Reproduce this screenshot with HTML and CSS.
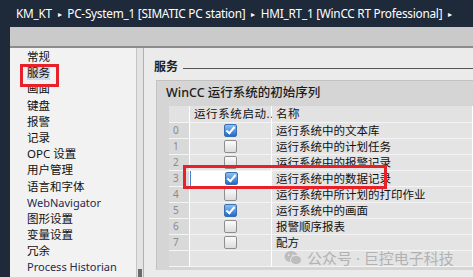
FILE: index.html
```html
<!DOCTYPE html>
<html>
<head>
<meta charset="utf-8">
<link rel="stylesheet" href="styles.css">
</head>
<body>
<div class="frame">
  <div class="crumbs">KM_KT <span class="arr">&#9656;</span> PC-System_1 [SIMATIC PC station] <span class="arr">&#9656;</span> HMI_RT_1 [WinCC RT Professional] <span class="arr">&#9656;</span></div>
  <div class="panel">
    <div class="toolbar"></div>
    <div class="body">
      <div class="nav">
        <div class="nav-item">常规</div>
        <div class="nav-item"><span class="mark">服务</span></div>
        <div class="nav-item">画面</div>
        <div class="nav-item">键盘</div>
        <div class="nav-item">报警</div>
        <div class="nav-item">记录</div>
        <div class="nav-item">OPC 设置</div>
        <div class="nav-item">用户管理</div>
        <div class="nav-item">语言和字体</div>
        <div class="nav-item latin">WebNavigator</div>
        <div class="nav-item">图形设置</div>
        <div class="nav-item">变量设置</div>
        <div class="nav-item">冗余</div>
        <div class="nav-item latin">Process Historian</div>
      </div>
      <div class="scroll"><div class="thumb"></div></div>
      <div class="content">
        <div class="section"><span class="section-title">服务</span><span class="rule"></span></div>
        <div class="group">
          <div class="group-title">WinCC 运行系统的初始序列</div>
          <div class="grid">
            <div class="hd"></div><div class="hd">运行系统启动...</div><div class="hd">名称</div>

            <div class="idx">0</div><div class="chk"><span class="box on"></span></div><div class="name">运行系统中的文本库</div>
            <div class="idx">1</div><div class="chk"><span class="box"></span></div><div class="name">运行系统中的计划任务</div>
            <div class="idx">2</div><div class="chk"><span class="box"></span></div><div class="name">运行系统中的报警记录</div>
            <div class="idx">3</div><div class="chk sel"><span class="box on"></span></div><div class="name">运行系统中的数据记录</div>
            <div class="idx">4</div><div class="chk"><span class="box"></span></div><div class="name">运行系统中所计划的打印作业</div>
            <div class="idx">5</div><div class="chk"><span class="box on"></span></div><div class="name">运行系统中的画面</div>
            <div class="idx">6</div><div class="chk"><span class="box"></span></div><div class="name">报警顺序报表</div>
            <div class="idx">7</div><div class="chk"><span class="box"></span></div><div class="name">配方</div>
            <div class="idx"></div><div class="chk"></div><div class="name"></div>
          </div>
          <div class="redbox"></div>
        </div>
        <div class="watermark">
          <svg width="18" height="16" viewBox="0 0 18 16"><ellipse cx="7" cy="6.5" rx="6.5" ry="5.5" fill="#bdbdbd"/><ellipse cx="12" cy="10" rx="5.5" ry="4.6" fill="#bdbdbd" stroke="#e6e6e6" stroke-width="1"/><circle cx="4.8" cy="5.2" r="0.9" fill="#e6e6e6"/><circle cx="9" cy="5.2" r="0.9" fill="#e6e6e6"/></svg>
          公众号 · 巨控电子科技
        </div>
      </div>
    </div>
  </div>
</div>
</body>
</html>
```

FILE: styles.css
```css
body {
  margin: 0;
  width: 473px;
  height: 277px;
  overflow: hidden;
  font-family: "Noto Sans", "Noto Sans CJK SC", sans-serif;
}

.frame {
  background-color: #1e2a3a;
  height: 277px;
  display: flex;
  flex-direction: column;
}

.crumbs {
  height: 27px;
  line-height: 27px;
  padding-left: 16px;
  color: #ffffff;
  font-size: 11.8px;
  letter-spacing: -0.25px;
  white-space: nowrap;
  overflow: hidden;
}

.arr {
  font-size: 8px;
  margin: 0 3px;
  position: relative;
  top: -1px;
}

.panel {
  margin-left: 10px;
  flex: 1;
  display: flex;
  flex-direction: column;
  background-color: #ececec;
}

.toolbar {
  height: 19px;
  background-color: #cacaca;
  border-bottom: 2px solid #8c8c8c;
}

.body {
  flex: 1;
  display: flex;
}

.nav {
  width: 126px;
  padding-top: 1px;
  background-color: #f2f2f2;
}

.nav-item {
  height: 16.2px;
  line-height: 16px;
  padding-left: 17px;
  font-size: 11.5px;
  color: #111;
}

.nav-item.latin {
  color: #1e2a50;
  font-size: 11px;
}

.mark {
  position: relative;
  background-color: #cfd8e6;
}

.mark::after {
  content: "";
  position: absolute;
  left: -7px;
  top: -1px;
  width: 39px;
  height: 23px;
  border: 3px solid #e8202a;
  box-sizing: border-box;
}

.scroll {
  width: 6px;
  background-color: #e4e4e4;
  border-left: 1px solid #c4c4c4;
  border-right: 1px solid #b0b0b0;
  position: relative;
}

.thumb {
  position: absolute;
  left: 1px;
  right: 1px;
  bottom: 0;
  height: 8px;
  background-color: #6a6a6a;
}

.content {
  flex: 1;
  position: relative;
  padding-left: 10px;
  overflow: hidden;
  background-color: #ebebeb;
}

.section {
  display: flex;
  align-items: center;
  height: 18px;
  margin-top: 9px;
}

.section-title {
  font-size: 12px;
  font-weight: bold;
  color: #222;
}

.rule {
  flex: 1;
  height: 1px;
  margin: 5px 0 0 5px;
  background-color: #555;
}

.group {
  position: relative;
  margin-top: 5px;
  margin-left: 2px;
  background-color: #d5d5d5;
  border-top: 1px solid #c2c2c2;
  border-left: 1px solid #c2c2c2;
  padding: 0 0 3px 12px;
  height: 190px;
  box-sizing: border-box;
}

.group-title {
  height: 25px;
  line-height: 23px;
  margin-left: -3px;
  font-size: 12.5px;
  color: #1c1c1c;
  font-weight: 500;
}

.grid {
  display: grid;
  grid-template-columns: 21px 82px 1fr;
  grid-auto-rows: 16px;
  grid-template-rows: 17px;
  font-size: 11.5px;
  color: #111;
}

.grid > div {
  border-right: 1px solid #ffffff;
  border-bottom: 1px solid #f4f4f4;
  box-sizing: border-box;
  white-space: nowrap;
}

.hd {
  background-color: #e2e2e2;
  line-height: 16px;
  padding-left: 4px;
  letter-spacing: 0.6px;
}

.idx {
  background-color: #d9d9d9;
  color: #8a8a8a;
  font-size: 10px;
  line-height: 15px;
  padding-left: 4px;
}

.chk {
  background-color: #e4e4e4;
  display: flex;
  justify-content: center;
  align-items: center;
}

.chk.sel {
  background-color: #ffffff;
  border-left: 1px solid #4a7fc4;
}

.name {
  background-color: #e4e4e4;
  line-height: 15px;
  padding-left: 4px;
}

.box {
  width: 11px;
  height: 11px;
  border: 1px solid #8e8e8e;
  border-radius: 2px;
  background: linear-gradient(#fbfbfb, #dcdcdc);
  position: relative;
}

.box.on {
  border-color: #3a6fb0;
  background: linear-gradient(#8fc0f0, #1f6cc8);
}

.box.on::after {
  content: "";
  position: absolute;
  left: 3px;
  top: 0px;
  width: 3px;
  height: 7px;
  border-right: 2px solid #fff;
  border-bottom: 2px solid #fff;
  transform: rotate(40deg);
}

.redbox {
  position: absolute;
  left: 26px;
  top: 84px;
  width: 204px;
  height: 24px;
  border: 3px solid #e8202a;
  box-sizing: border-box;
}

.watermark {
  position: absolute;
  left: 140px;
  top: 199px;
  font-size: 15px;
  color: #b2b2b2;
  display: flex;
  align-items: center;
  gap: 5px;
  white-space: nowrap;
}
```
